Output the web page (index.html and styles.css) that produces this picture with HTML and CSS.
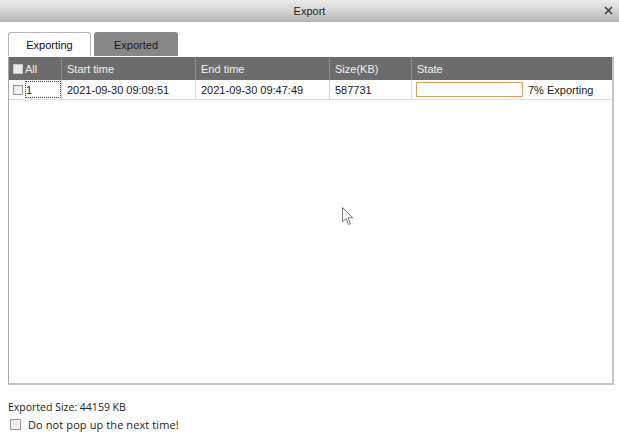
FILE: index.html
```html
<!DOCTYPE html>
<html>
<head>
<meta charset="utf-8">
<link rel="stylesheet" href="styles.css">
</head>
<body>
<div class="window">
  <div class="titlebar">
    <span class="title">Export</span>
    <svg class="close" width="9" height="9" viewBox="0 0 9 9">
      <path d="M1 1 L8 8 M8 1 L1 8" stroke="#333" stroke-width="1.4" fill="none"/>
    </svg>
  </div>
  <div class="content">
    <div class="tabs">
      <div class="tab active">Exporting</div>
      <div class="tab">Exported</div>
    </div>
    <div class="table">
      <div class="row head">
        <div class="cell c0"><span class="cb cb-head"></span>All</div>
        <div class="cell">Start time</div>
        <div class="cell">End time</div>
        <div class="cell">Size(KB)</div>
        <div class="cell last">State</div>
      </div>
      <div class="row data">
        <div class="cell c0"><span class="cb"></span><span class="focus">1</span></div>
        <div class="cell">2021-09-30 09:09:51</div>
        <div class="cell">2021-09-30 09:47:49</div>
        <div class="cell">587731</div>
        <div class="cell last state"><span class="progress"></span><span>7% Exporting</span></div>
      </div>
    </div>
    <div class="footer">
      <div class="size">Exported Size: 44159 KB</div>
      <label class="opt"><span class="cb cb-foot"></span>Do not pop up the next time!</label>
    </div>
  </div>
  <svg class="cursor" width="12" height="19" viewBox="0 0 12 19">
    <path d="M0.5 0.5 L0.5 15 L4 11.5 L6.5 17.5 L8.5 16.6 L6 10.8 L10.8 10.8 Z" fill="#fff" stroke="#777" stroke-width="1"/>
  </svg>
</div>
</body>
</html>
```

FILE: styles.css
```css
html, body {
  margin: 0;
  padding: 0;
  background: #fff;
}
body {
  font-family: "Liberation Sans", Arial, sans-serif;
  font-size: 11px;
  color: #1a1a1a;
}
.window {
  position: relative;
  width: 619px;
  height: 440px;
  overflow: hidden;
}
.titlebar {
  height: 22px;
  background: linear-gradient(#ececec, #d6d6d6 45%, #b4b4b4);
  display: flex;
  align-items: center;
  justify-content: center;
  position: relative;
  color: #222;
  font-size: 11px;
}
.close {
  position: absolute;
  right: 6px;
  top: 6px;
}
.content {
  padding: 10px 5px 0 8px;
}
.tabs {
  display: flex;
  gap: 3px;
  height: 24px;
}
.tab {
  width: 84px;
  box-sizing: border-box;
  display: flex;
  align-items: center;
  justify-content: center;
  border-radius: 3px 3px 0 0;
  background: #878787;
  color: #1a1a1a;
  border: 1px solid #8a8a8a;
  border-bottom: none;
}
.tab.active {
  width: 83px;
  background: #fff;
  border-color: #b5b5b5;
  color: #111;
}
.table {
  height: 328px;
  box-sizing: border-box;
  border-left: 1px solid #a8a8a8;
  border-right: 2px solid #c4c4c4;
  border-bottom: 2px solid #c4c4c4;
  margin-top: 1px;
}
.row {
  display: grid;
  grid-template-columns: 53px 134px 134px 82px 1fr;
}
.row.head {
  height: 23px;
  background: #6c6c6c;
  color: #f2f2f2;
}
.row.data {
  height: 19px;
  border-bottom: 1px solid #dcdcdc;
}
.cell {
  display: flex;
  align-items: center;
  padding-left: 5px;
  border-right: 1px solid #dadada;
  white-space: nowrap;
  overflow: hidden;
}
.head .cell {
  border-right: 1px solid #8e8e8e;
}
.cell.last {
  border-right: none;
}
.c0 {
  padding-left: 4px;
}
.cb {
  display: inline-block;
  width: 10px;
  height: 10px;
  box-sizing: border-box;
  border: 1px solid #9a9a9a;
  background: linear-gradient(135deg, #e4e4e4, #f8f8f8);
  margin-right: 2px;
  flex: none;
}
.cb-head {
  border-color: #c8c8c8;
  background: #eaeaea;
}
.focus {
  flex: 1;
  height: 17px;
  display: flex;
  align-items: center;
  outline: 1px dotted #444;
  outline-offset: -1px;
  padding-left: 1px;
}
.state {
  padding-left: 4px;
}
.progress {
  display: inline-block;
  width: 107px;
  height: 15px;
  box-sizing: border-box;
  border: 1px solid #e0a060;
  background: #fff;
  margin-right: 5px;
}
.footer {
  padding-top: 15px;
}
.size {
  height: 14px;
  line-height: 14px;
  font-family: "Open Sans", "Noto Sans", sans-serif;
  font-size: 10.5px;
  color: #222;
}
.opt {
  display: flex;
  align-items: center;
  margin-top: 3px;
  padding-left: 2px;
  font-family: "Open Sans", "Noto Sans", sans-serif;
  font-size: 11px;
  letter-spacing: 0.1px;
  color: #222;
}
.cb-foot {
  width: 11px;
  height: 11px;
  margin-right: 7px;
}
.cursor {
  position: absolute;
  left: 342px;
  top: 207px;
}
```
